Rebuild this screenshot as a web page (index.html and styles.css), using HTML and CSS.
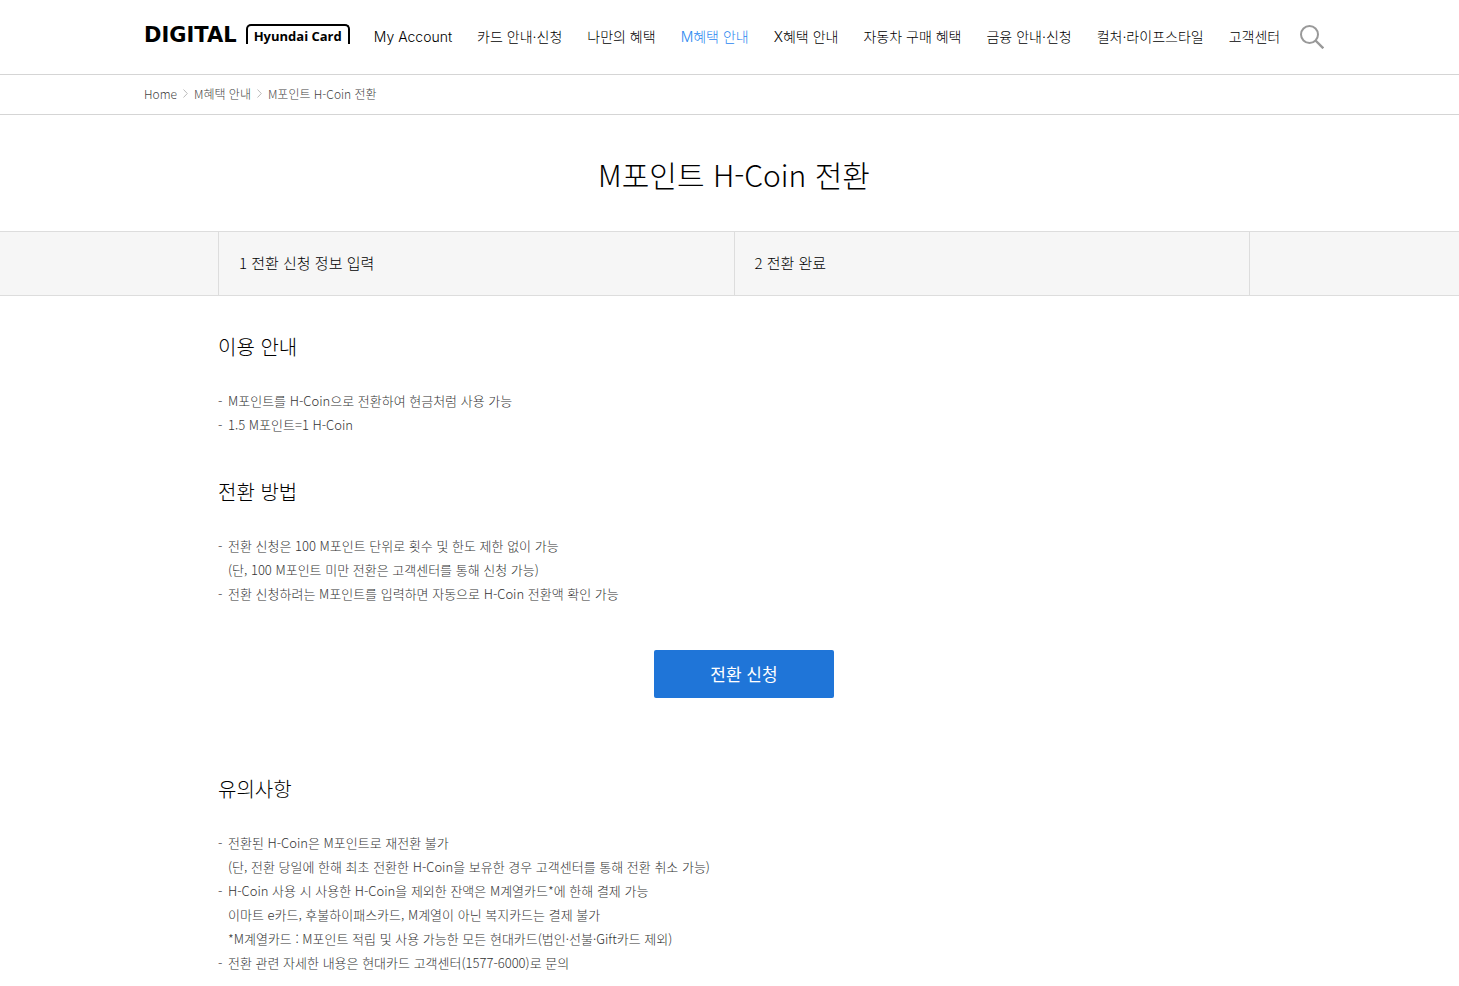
FILE: index.html
```
<!DOCTYPE html>
<html lang="ko">
<head>
    <meta charset="UTF-8">
    <meta name="viewport" content="width=device-width, initial-scale=1.0">
    <title>M포인트 H-Coin 전환</title>
    <link rel="stylesheet" href="styles.css">
</head>
<body>
    <header class="header">
        <div class="header-inner">
            <a href="#" class="logo">
                <span class="logo-digital">DIGITAL</span>
                <span class="logo-card">Hyundai Card</span>
            </a>
            <nav class="gnb">
                <a href="#">My Account</a>
                <a href="#">카드 안내·신청</a>
                <a href="#">나만의 혜택</a>
                <a href="#" class="on">M혜택 안내</a>
                <a href="#">X혜택 안내</a>
                <a href="#">자동차 구매 혜택</a>
                <a href="#">금융 안내·신청</a>
                <a href="#">컬처·라이프스타일</a>
                <a href="#">고객센터</a>
            </nav>
            <button type="button" class="search" aria-label="검색">
                <svg width="24" height="24" viewBox="0 0 24 24" fill="none" stroke="#999" stroke-width="2">
                    <circle cx="9.5" cy="9.5" r="8.5"/>
                    <path d="M15.5 15.5L23.3 23.3" stroke-width="2.4"/>
                </svg>
            </button>
        </div>
    </header>

    <div class="location">
        <div class="location-inner">
            <a href="#">Home</a>
            <svg width="5" height="9" viewBox="0 0 5 9" fill="none" stroke="#bbb"><path d="M.5 .5L4.3 4.5L.5 8.5"/></svg>
            <a href="#">M혜택 안내</a>
            <svg width="5" height="9" viewBox="0 0 5 9" fill="none" stroke="#bbb"><path d="M.5 .5L4.3 4.5L.5 8.5"/></svg>
            <a href="#">M포인트 H-Coin 전환</a>
        </div>
    </div>

    <h1 class="title">M포인트 H-Coin 전환</h1>

    <div class="step">
        <ol class="step-list">
            <li>1 전환 신청 정보 입력</li>
            <li>2 전환 완료</li>
        </ol>
    </div>

    <main class="content">
        <section>
            <h2>이용 안내</h2>
            <ul class="list">
                <li>M포인트를 H-Coin으로 전환하여 현금처럼 사용 가능</li>
                <li>1.5 M포인트=1 H-Coin</li>
            </ul>
        </section>
        <section>
            <h2>전환 방법</h2>
            <ul class="list">
                <li>전환 신청은 100 M포인트 단위로 횟수 및 한도 제한 없이 가능<br>(단, 100 M포인트 미만 전환은 고객센터를 통해 신청 가능)</li>
                <li>전환 신청하려는 M포인트를 입력하면 자동으로 H-Coin 전환액 확인 가능</li>
            </ul>
        </section>
        <div class="btn-area">
            <button type="button" class="btn">전환 신청</button>
        </div>
        <section>
            <h2>유의사항</h2>
            <ul class="list">
                <li>전환된 H-Coin은 M포인트로 재전환 불가<br>(단, 전환 당일에 한해 최초 전환한 H-Coin을 보유한 경우 고객센터를 통해 전환 취소 가능)</li>
                <li>H-Coin 사용 시 사용한 H-Coin을 제외한 잔액은 M계열카드*에 한해 결제 가능<br>이마트 e카드, 후불하이패스카드, M계열이 아닌 복지카드는 결제 불가<br>*M계열카드 : M포인트 적립 및 사용 가능한 모든 현대카드(법인·선불·Gift카드 제외)</li>
                <li>전환 관련 자세한 내용은 현대카드 고객센터(1577-6000)로 문의</li>
            </ul>
        </section>
    </main>
</body>
</html>
```

FILE: styles.css
```
* {
    box-sizing: border-box;
}

body {
    margin: 0;
    background-color: #fff;
    color: #000;
    font-family: "Noto Sans CJK KR", sans-serif;
    font-weight: 300;
}

a {
    color: inherit;
    text-decoration: none;
}

h1, h2, ul, ol {
    margin: 0;
    padding: 0;
    font-weight: 300;
    list-style: none;
}

button {
    padding: 0;
    border: 0;
    background: none;
    font-family: inherit;
    cursor: pointer;
}

.header,
.location,
.title,
.step,
.content {
    padding-left: 9px;
}

/* header */
.header {
    border-bottom: 1px solid #d5d5d5;
}

.header-inner {
    display: flex;
    align-items: flex-start;
    max-width: 1180px;
    margin: 0 auto;
    padding: 24px 0;
}

.logo {
    display: flex;
    gap: 9px;
    margin-right: 24px;
    line-height: 20px;
    font-weight: bold;
    white-space: nowrap;
}

.logo-digital {
    font-family: "DejaVu Sans", sans-serif;
    font-size: 21px;
    line-height: 22px;
}

.logo-card {
    height: 20px;
    padding: 0 6px;
    border: 2px solid #000;
    border-bottom: 0;
    border-radius: 5px 5px 0 0;
    font-family: "Open Sans", sans-serif;
    font-size: 13px;
}

.gnb {
    display: flex;
    gap: 25px;
    font-family: Inter, "Noto Sans CJK KR", sans-serif;
    font-size: 14px;
    line-height: 26px;
    white-space: nowrap;
}

.gnb .on {
    color: #2b87f0;
}

.search {
    height: 24px;
    margin-top: 1px;
    margin-left: auto;
}

.search svg {
    display: block;
}

/* breadcrumb */
.location {
    border-bottom: 1px solid #d5d5d5;
}

.location-inner {
    display: flex;
    align-items: center;
    gap: 6px;
    max-width: 1180px;
    margin: 0 auto;
    padding-bottom: 2px;
    color: #444;
    font-size: 12px;
    line-height: 37px;
}

.title {
    padding-top: 35px;
    padding-bottom: 33px;
    font-size: 30px;
    line-height: 48px;
    text-align: center;
}

/* step */
.step {
    border-top: 1px solid #ddd;
    border-bottom: 1px solid #ddd;
    background-color: #f6f6f6;
}

.step-list {
    display: flex;
    max-width: 1032px;
    margin: 0 auto;
    border-right: 1px solid #ddd;
    font-size: 15px;
    line-height: 61px;
}

.step-list li {
    flex: 1;
    padding: 0 0 2px 20px;
    border-left: 1px solid #ddd;
}

/* content */
.content h2,
.list,
.btn-area {
    max-width: 1032px;
    margin: 0 auto;
}

.content {
    padding-top: 36px;
    padding-bottom: 11px;
}

.content section + section {
    margin-top: 40px;
}

.content h2 {
    font-size: 20px;
    line-height: 30px;
}

.list {
    padding-top: 27px;
    color: #333;
    font-size: 13px;
    line-height: 24px;
}

.list li {
    display: grid;
    grid-template-columns: 10px 1fr;
}

.list li::before {
    content: "-";
    grid-row: 1 / span 3;
}

.btn-area {
    padding: 44px 0 76px 20px;
    text-align: center;
}

.btn {
    width: 180px;
    height: 48px;
    padding-bottom: 2px;
    border-radius: 2px;
    background-color: #1f75d8;
    color: #fff;
    font-size: 17px;
    vertical-align: top;
}
```
